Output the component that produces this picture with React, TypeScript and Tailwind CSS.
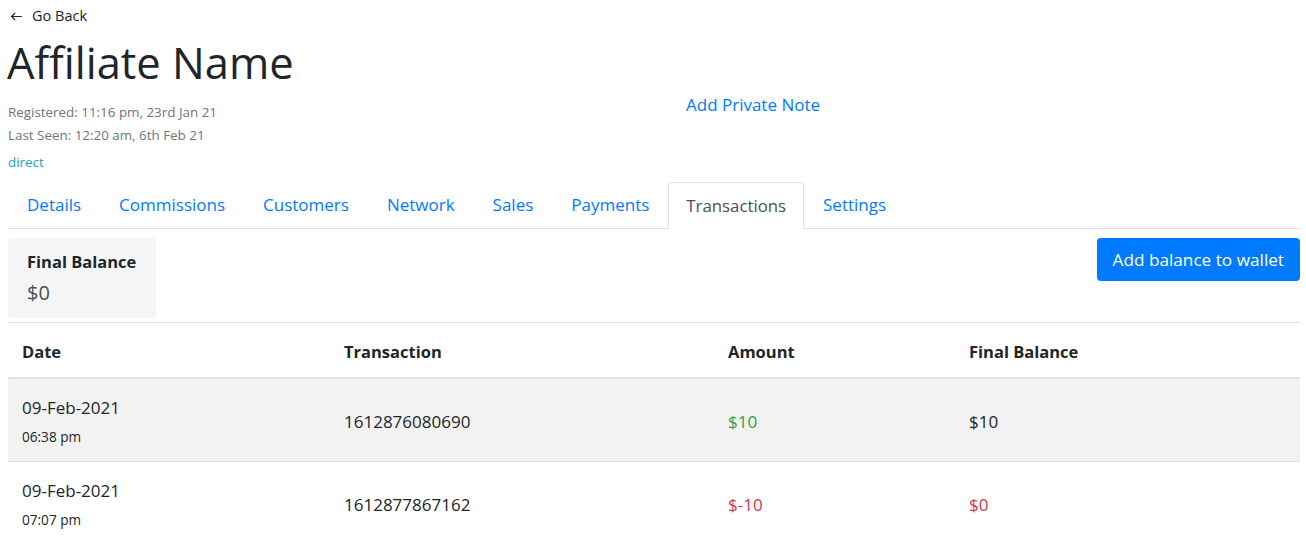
import React from 'react';

const TABS = ['Details', 'Commissions', 'Customers', 'Network', 'Sales', 'Payments', 'Transactions', 'Settings'];

const ROWS = [
  { date: '09-Feb-2021', time: '06:38 pm', id: '1612876080690', amount: '$10', balance: '$10', amountCls: 'text-[#28a745]', balanceCls: 'text-[#212529]', bg: 'bg-[#f2f2f2]' },
  { date: '09-Feb-2021', time: '07:07 pm', id: '1612877867162', amount: '$-10', balance: '$0', amountCls: 'text-[#dc3545]', balanceCls: 'text-[#dc3545]', bg: 'bg-white' },
];

export default function App() {
  return (
    <div className="min-h-screen bg-white pl-2 pr-[6px] text-[#212529] font-['Open_Sans','Noto_Sans',sans-serif]">
      {/* header */}
      <div className="flex items-center gap-[9px] h-[32px] text-[14.5px]">
        <svg width="13" height="13" viewBox="0 0 24 24" fill="none" stroke="currentColor" strokeWidth="2" strokeLinecap="round" strokeLinejoin="round" className="ml-[2px]">
          <line x1="21" y1="12" x2="3" y2="12" />
          <polyline points="9 6 3 12 9 18" />
        </svg>
        <span>Go Back</span>
      </div>

      <div className="flex">
        <div className="w-[678px]">
          <h1 className="text-[43.5px] leading-[52px] mt-[5px] -ml-[1px]">Affiliate Name</h1>
          <div className="mt-[12px] text-[13.4px] leading-[23px] text-[#6c757d]">
            <div>Registered: 11:16 pm, 23rd Jan 21</div>
            <div>Last Seen: 12:20 am, 6th Feb 21</div>
          </div>
          <div className="text-[13.4px] leading-[30px] text-[#17a2b8]">direct</div>
        </div>
        <div className="pt-[61px] text-[17px] leading-[23px] text-[#007bff]">Add Private Note</div>
      </div>

      {/* tabs */}
      <div className="mt-[5px] flex border-b border-[#dee2e6]">
        {TABS.map((t) =>
          t === 'Transactions' ? (
            <div key={t} className="-mb-px px-[17px] h-[47px] flex items-center text-[16.8px] text-[#495057] bg-white border border-[#dee2e6] border-b-white rounded-t-[4px]">
              {t}
            </div>
          ) : (
            <div key={t} className="px-[19px] h-[46px] flex items-center text-[17px] text-[#007bff]">
              {t}
            </div>
          )
        )}
      </div>

      {/* balance + button */}
      <div className="mt-[9px] flex items-start justify-between border-b border-[#dee2e6] pb-[4px]">
        <div className="w-[148px] h-[80px] rounded-[4px] bg-[#f4f5f7] px-[19px] pt-[12px]">
          <div className="text-[16.5px] leading-[24px] font-bold whitespace-nowrap">Final Balance</div>
          <div className="mt-[6px] text-[20px] leading-[26px] text-[#495057]">$0</div>
        </div>
        <button className="h-[43px] px-[16px] rounded-[4px] bg-[#007bff] text-white text-[17.2px]">Add balance to wallet</button>
      </div>

      {/* table */}
      <table className="w-full border-collapse text-[17px]">
        <thead>
          <tr className="h-[55px] border-b-2 border-[#dee2e6] text-[16.5px]">
            <th className="w-[322px] pl-[14px] pt-[5px] text-left font-bold">Date</th>
            <th className="w-[384px] pl-[14px] pt-[5px] text-left font-bold">Transaction</th>
            <th className="w-[241px] pl-[14px] pt-[5px] text-left font-bold">Amount</th>
            <th className="pl-[14px] pt-[5px] text-left font-bold">Final Balance</th>
          </tr>
        </thead>
        <tbody>
          {ROWS.map((r, i) => (
            <tr key={i} className={`border-b border-[#dee2e6] ${r.bg}`}>
              <td className="pl-[14px] pt-[17px] pb-[12px]">
                <div className="leading-[24px]">{r.date}</div>
                <div className="mt-[5px] text-[13.6px] leading-[24px]">{r.time}</div>
              </td>
              <td className="pl-[14px] pt-[3px]">{r.id}</td>
              <td className={`pl-[14px] pt-[3px] ${r.amountCls}`}>{r.amount}</td>
              <td className={`pl-[14px] pt-[3px] ${r.balanceCls}`}>{r.balance}</td>
            </tr>
          ))}
        </tbody>
      </table>
    </div>
  );
}
